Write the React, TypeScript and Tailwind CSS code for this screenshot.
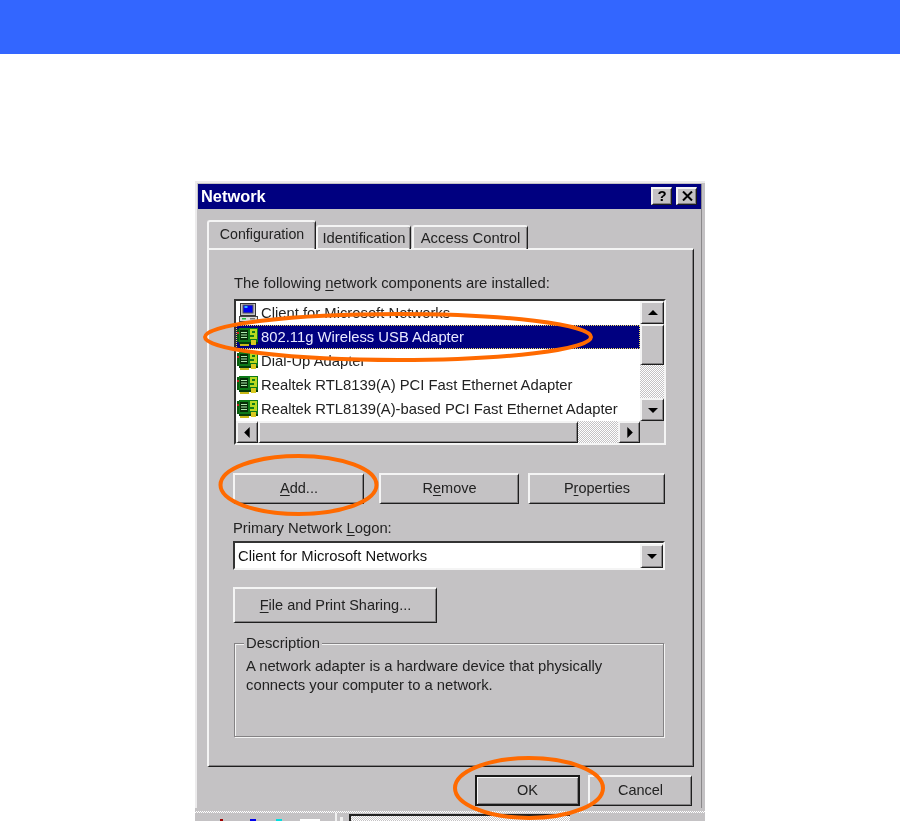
import React from "react";

const raised =
  "border-t-2 border-l-2 border-r border-b border-t-[#f4f4f4] border-l-[#f4f4f4] border-r-[#1e1e1e] border-b-[#1e1e1e] bg-[#c4c2c4] shadow-[inset_-1px_-1px_0_#848284]";
const dither =
  "bg-[repeating-conic-gradient(#ffffff_0_25%,#c4c2c4_0_50%)] bg-[length:2px_2px]";

function Btn({ className, children }: { className: string; children: React.ReactNode }) {
  return (
    <div className={`flex items-center justify-center pb-[2px] text-[14.5px] text-[#222] ${raised} ${className}`}>
      <span>{children}</span>
    </div>
  );
}

function Tri({ d, size = 10 }: { d: string; size?: number }) {
  return (
    <svg width={size} height={size} viewBox="0 0 10 10">
      <path d={d} fill="#000" />
    </svg>
  );
}

function CardIcon() {
  return (
    <svg width="22" height="20" viewBox="0 0 22 20" className="shrink-0">
      <rect x="0" y="2" width="3" height="13" fill="#0a5a10" />
      <rect x="2" y="1" width="19" height="14" fill="#0e7a18" />
      <rect x="2" y="15" width="19" height="2" fill="#063d0a" />
      <rect x="3" y="3" width="8" height="10" fill="#062c08" />
      <path d="M4 5.5h6M4 8h6M4 10.5h6" stroke="#b0e8b0" strokeWidth="1" />
      <rect x="13" y="2" width="7" height="10" fill="#b8d820" />
      <rect x="15" y="4" width="3" height="2" fill="#0e7a18" />
      <rect x="13" y="8" width="4" height="2" fill="#0e7a18" />
      <rect x="14" y="13" width="5" height="5" fill="#d8c820" />
      <rect x="3" y="17" width="9" height="2" fill="#c8b818" />
      <rect x="0" y="5" width="2" height="2" fill="#c02020" />
    </svg>
  );
}

function PcIcon() {
  return (
    <svg width="22" height="20" viewBox="0 0 22 20" className="shrink-0">
      <rect x="3.5" y="0.5" width="15" height="12" fill="#c4c2c4" stroke="#333" strokeWidth="1" />
      <rect x="6" y="2" width="10" height="8" fill="#0000ee" stroke="#555" strokeWidth="1" />
      <rect x="7.5" y="3" width="3" height="2" fill="#30b0ff" />
      <rect x="2.5" y="13.5" width="18" height="5" fill="#dcdcdc" stroke="#444" strokeWidth="1" />
      <rect x="5" y="15" width="4" height="1.5" fill="#20c040" />
      <rect x="13" y="15" width="5" height="1.5" fill="#777" />
    </svg>
  );
}

function Row({
  icon,
  label,
  selected,
}: {
  icon: React.ReactNode;
  label: string;
  selected?: boolean;
}) {
  return (
    <div
      className={
        selected
          ? "flex h-6 items-center border border-dotted border-[#f0e060] bg-[#000080] text-[#e8e8ff]"
          : "flex h-6 items-center border border-transparent text-[#222]"
      }
    >
      {icon}
      <span className="ml-[2px] whitespace-nowrap">{label}</span>
    </div>
  );
}

const tab =
  "flex items-center justify-center rounded-t-[3px] border-l-2 border-r border-t-2 border-l-[#f4f4f4] border-r-[#1e1e1e] border-t-[#f4f4f4] text-[#222] shadow-[inset_-1px_0_0_#848284]";

export default function App() {
  return (
    <div className="relative h-[821px] w-[900px] overflow-hidden bg-white font-['Liberation_Sans',Arial,sans-serif] text-[14.8px] leading-[18px]">
      <div className="h-[54px] bg-[#3366ff]" />

      <div className="ml-[195px] mt-[127px] h-[627px] w-[510px] border-l-2 border-t-2 border-[#ecebec] bg-[#c4c2c4] pl-px pr-[3px] pt-[1px] blur-[0.35px]">
        <div className="h-full border-r border-[#8a888a]">
          {/* title bar */}
          <div className="flex h-[25px] items-center justify-between bg-[#000080] pb-[2px] pl-[3px] pr-[4px]">
            <span className="text-[16.4px] font-bold text-white">Network</span>
            <div className="flex gap-[4px]">
              <div className={`flex h-[18px] w-[21px] items-center justify-center text-[15px] font-bold text-black ${raised}`}>?</div>
              <div className={`flex h-[18px] w-[21px] items-center justify-center ${raised}`}>
                <svg width="11" height="10" viewBox="0 0 11 10">
                  <path d="M1 0.5L10 9.5M10 0.5L1 9.5" stroke="#000" strokeWidth="2" />
                </svg>
              </div>
            </div>
          </div>

          {/* tabs */}
          <div className="ml-[9px] mt-[12px] flex h-[28px] items-end">
            <div className={`relative z-10 h-[29px] w-[109px] pb-[3px] text-[14.2px] ${tab}`}>Configuration</div>
            <div className={`h-[24px] w-[95px] pb-[1px] ${tab}`}>Identification</div>
            <div className={`ml-[1px] h-[24px] w-[116px] pb-[1px] ${tab}`}>Access Control</div>
          </div>

          {/* panel */}
          <div className={`-mt-px ml-[9px] h-[519px] w-[487px] pl-[25px] pt-[24px] text-[#222] ${raised}`}>
            <div className="h-[18px]">
              The following <u className="underline-offset-2">n</u>etwork components are installed:
            </div>

            {/* list box */}
            <div className="mt-[7px] h-[146px] w-[432px] border-2 border-b-[#f4f4f4] border-l-[#333] border-r-[#f4f4f4] border-t-[#333] bg-white">
              <div className="flex h-[120px]">
                <div className="min-w-0 flex-1 overflow-hidden">
                  <Row icon={<PcIcon />} label="Client for Microsoft Networks" />
                  <Row icon={<CardIcon />} label="802.11g Wireless USB Adapter" selected />
                  <Row icon={<CardIcon />} label="Dial-Up Adapter" />
                  <Row icon={<CardIcon />} label="Realtek RTL8139(A) PCI Fast Ethernet Adapter" />
                  <Row icon={<CardIcon />} label="Realtek RTL8139(A)-based PCI Fast Ethernet Adapter" />
                </div>
                <div className="flex w-[24px] shrink-0 flex-col">
                  <div className={`flex h-[23px] items-center justify-center ${raised}`}>
                    <Tri d="M5 2L10 7H0Z" />
                  </div>
                  <div className={`h-[41px] ${raised}`} />
                  <div className={`flex-1 ${dither}`} />
                  <div className={`flex h-[23px] items-center justify-center ${raised}`}>
                    <Tri d="M0 3H10L5 8Z" />
                  </div>
                </div>
              </div>
              <div className="flex h-[22px] bg-[#c4c2c4]">
                <div className={`flex w-[22px] items-center justify-center ${raised}`}>
                  <Tri d="M7 0V10L2 5Z" size={11} />
                </div>
                <div className={`w-[320px] ${raised}`} />
                <div className={`w-[40px] ${dither}`} />
                <div className={`flex w-[22px] items-center justify-center ${raised}`}>
                  <Tri d="M3 0V10L8 5Z" size={11} />
                </div>
              </div>
            </div>

            {/* buttons */}
            <div className="-ml-px mt-[28px] flex">
              <Btn className="h-[31px] w-[131px]">
                <u className="underline-offset-2">A</u>dd...
              </Btn>
              <Btn className="ml-[15px] h-[31px] w-[140px]">
                R<u className="underline-offset-2">e</u>move
              </Btn>
              <Btn className="ml-[9px] h-[31px] w-[137px]">
                P<u className="underline-offset-2">r</u>operties
              </Btn>
            </div>

            <div className="-ml-px mt-[15px] h-[18px]">
              Primary Network <u className="underline-offset-2">L</u>ogon:
            </div>

            {/* select */}
            <div className="-ml-px mt-[4px] flex h-[29px] w-[432px] items-center border-2 border-b-[#f4f4f4] border-l-[#333] border-r-[#f4f4f4] border-t-[#333] bg-white pl-[3px]">
              <span className="flex-1 text-[#111]">Client for Microsoft Networks</span>
              <div className={`flex h-[24px] w-[23px] shrink-0 items-center justify-center ${raised}`}>
                <Tri d="M0 3H10L5 8Z" />
              </div>
            </div>

            <Btn className="-ml-px mt-[17px] h-[36px] w-[204px]">
              <u className="underline-offset-2">F</u>ile and Print Sharing...
            </Btn>

            {/* description */}
            <div className="mt-[20px] h-[94px] w-[430px] border border-[#848284] shadow-[1px_1px_0_#f4f4f4,inset_1px_1px_0_#f4f4f4]">
              <div className="-mt-[10px] ml-[9px] w-fit bg-[#c4c2c4] px-[2px]">Description</div>
              <div className="ml-[11px] mt-[5px] leading-[19px]">
                A network adapter is a hardware device that physically
                <br />
                connects your computer to a network.
              </div>
            </div>
          </div>

          {/* OK / Cancel */}
          <div className="ml-[277px] mt-[8px] flex">
            <div className="flex h-[31px] w-[105px] items-center justify-center border-2 border-[#1a1a1a] bg-[#c4c2c4] pb-[2px] text-[14.5px] text-[#222] shadow-[inset_1px_1px_0_#f4f4f4,inset_-1px_-1px_0_#848284]">
              OK
            </div>
            <Btn className="ml-[8px] h-[31px] w-[104px]">Cancel</Btn>
          </div>
        </div>
      </div>

      {/* strip under the dialog */}
      <div className="ml-[195px] h-[13px] w-[510px] bg-[#c4c2c4] pt-[3px] blur-[0.35px]">
        <div className={`h-[2px] ${dither}`} />
        <div className="flex h-[8px]">
          <div className="ml-[25px] mt-[6px] h-[2px] w-[3px] bg-[#a00000]" />
          <div className="ml-[27px] mt-[6px] h-[2px] w-[6px] bg-[#0000ee]" />
          <div className="ml-[20px] mt-[6px] h-[2px] w-[6px] bg-[#00e0e0]" />
          <div className="ml-[18px] mt-[6px] h-[2px] w-[20px] bg-white" />
          <div className="ml-[15px] h-[8px] w-[2px] bg-[#f0f0f0]" />
          <div className="ml-[3px] mt-[4px] h-[4px] w-[3px] bg-[#f0f0f0]" />
          <div className={`ml-[6px] mt-[1px] h-[7px] w-[221px] border-l-2 border-t-2 border-[#222] ${dither}`} />
        </div>
      </div>

      {/* hand-drawn orange markers over the dialog */}
      <svg className="absolute left-0 top-0" width="900" height="821" fill="none" stroke="#ff6a00" strokeWidth="4">
        <ellipse cx="398" cy="337" rx="193" ry="23" />
        <ellipse cx="298.5" cy="485" rx="78" ry="29" />
        <ellipse cx="529" cy="788" rx="74" ry="30" />
      </svg>
    </div>
  );
}
